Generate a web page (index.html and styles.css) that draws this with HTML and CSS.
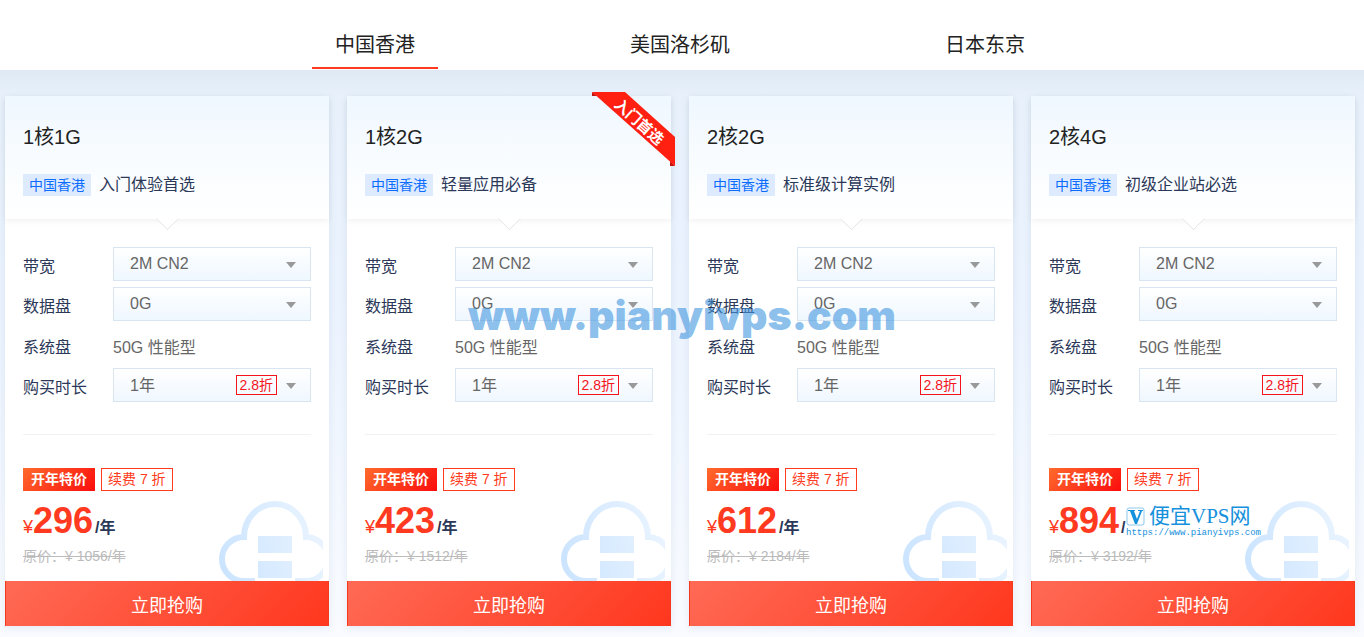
FILE: index.html
```html
<!DOCTYPE html>
<html lang="zh-CN">
<head>
    <meta charset="UTF-8">
    <meta name="viewport" content="width=device-width, initial-scale=1.0">
    <title>云服务器特价</title>
    <link rel="stylesheet" href="styles.css">
</head>
<body>
    <!-- shared shapes -->
    <svg class="sprite" width="0" height="0" aria-hidden="true">
        <defs>
            <linearGradient id="cloud-fill" gradientUnits="userSpaceOnUse" x1="0" y1="60" x2="104" y2="30">
                <stop offset="0" stop-color="#cbe4ff"/>
                <stop offset="1" stop-color="#eaf4ff"/>
            </linearGradient>
            <symbol id="cloud" viewBox="0 0 104 80">
                <path d="M36 80H25A22 22 0 0 1 25 36A31 33 0 0 1 87 36A22 22 0 0 1 87 80H76" fill="none" stroke="url(#cloud-fill)" stroke-width="6"/>
                <path d="M39 35h34v17H39zM39 60h34v17H39z" fill="url(#cloud-fill)"/>
            </symbol>
        </defs>
    </svg>

    <nav class="tabs">
        <a class="tab active" href="#hk"><span>中国香港</span></a>
        <a class="tab" href="#la"><span>美国洛杉矶</span></a>
        <a class="tab" href="#tokyo"><span>日本东京</span></a>
    </nav>

    <main class="plans">
        <form class="card">
            <div class="card-head">
                <h2>1核1G</h2>
                <p class="desc"><span class="region">中国香港</span>入门体验首选</p>
            </div>
            <div class="card-body">
                <div class="row">
                    <label for="bw1">带宽</label>
                    <div class="field"><select id="bw1"><option>2M CN2</option></select></div>
                </div>
                <div class="row">
                    <label for="disk1">数据盘</label>
                    <div class="field"><select id="disk1"><option>0G</option></select></div>
                </div>
                <div class="row row-text">
                    <span class="name">系统盘</span>
                    <span class="value">50G 性能型</span>
                </div>
                <div class="row">
                    <label for="time1">购买时长</label>
                    <div class="field"><select class="time" id="time1"><option>1年</option></select><span class="discount">2.8折</span></div>
                </div>
            </div>
            <div class="card-price">
                <div class="promo"><span class="special">开年特价</span><span class="renew">续费 7 折</span></div>
                <p class="price"><span class="yen">¥</span><strong>296</strong><span class="unit">/年</span></p>
                <p class="old"><del>原价：¥ 1056/年</del></p>
                <svg class="cloud" aria-hidden="true"><use href="#cloud"/></svg>
            </div>
            <button type="submit">立即抢购</button>
        </form>

        <form class="card">
            <!-- corner ribbon -->
            <svg class="ribbon" viewBox="0 0 83 74">
                <path d="M0 0v4h5zM83 74h-5v-5z" fill="#c4140c"/>
                <path d="M0 0h33l50 45v29z" fill="#ff2012"/>
                <text x="47" y="35" transform="rotate(42 47 30)">入门首选</text>
            </svg>
            <div class="card-head">
                <h2>1核2G</h2>
                <p class="desc"><span class="region">中国香港</span>轻量应用必备</p>
            </div>
            <div class="card-body">
                <div class="row">
                    <label for="bw2">带宽</label>
                    <div class="field"><select id="bw2"><option>2M CN2</option></select></div>
                </div>
                <div class="row">
                    <label for="disk2">数据盘</label>
                    <div class="field"><select id="disk2"><option>0G</option></select></div>
                </div>
                <div class="row row-text">
                    <span class="name">系统盘</span>
                    <span class="value">50G 性能型</span>
                </div>
                <div class="row">
                    <label for="time2">购买时长</label>
                    <div class="field"><select class="time" id="time2"><option>1年</option></select><span class="discount">2.8折</span></div>
                </div>
            </div>
            <div class="card-price">
                <div class="promo"><span class="special">开年特价</span><span class="renew">续费 7 折</span></div>
                <p class="price"><span class="yen">¥</span><strong>423</strong><span class="unit">/年</span></p>
                <p class="old"><del>原价：¥ 1512/年</del></p>
                <svg class="cloud" aria-hidden="true"><use href="#cloud"/></svg>
            </div>
            <button type="submit">立即抢购</button>
        </form>

        <form class="card">
            <div class="card-head">
                <h2>2核2G</h2>
                <p class="desc"><span class="region">中国香港</span>标准级计算实例</p>
            </div>
            <div class="card-body">
                <div class="row">
                    <label for="bw3">带宽</label>
                    <div class="field"><select id="bw3"><option>2M CN2</option></select></div>
                </div>
                <div class="row">
                    <label for="disk3">数据盘</label>
                    <div class="field"><select id="disk3"><option>0G</option></select></div>
                </div>
                <div class="row row-text">
                    <span class="name">系统盘</span>
                    <span class="value">50G 性能型</span>
                </div>
                <div class="row">
                    <label for="time3">购买时长</label>
                    <div class="field"><select class="time" id="time3"><option>1年</option></select><span class="discount">2.8折</span></div>
                </div>
            </div>
            <div class="card-price">
                <div class="promo"><span class="special">开年特价</span><span class="renew">续费 7 折</span></div>
                <p class="price"><span class="yen">¥</span><strong>612</strong><span class="unit">/年</span></p>
                <p class="old"><del>原价：¥ 2184/年</del></p>
                <svg class="cloud" aria-hidden="true"><use href="#cloud"/></svg>
            </div>
            <button type="submit">立即抢购</button>
        </form>

        <form class="card">
            <div class="card-head">
                <h2>2核4G</h2>
                <p class="desc"><span class="region">中国香港</span>初级企业站必选</p>
            </div>
            <div class="card-body">
                <div class="row">
                    <label for="bw4">带宽</label>
                    <div class="field"><select id="bw4"><option>2M CN2</option></select></div>
                </div>
                <div class="row">
                    <label for="disk4">数据盘</label>
                    <div class="field"><select id="disk4"><option>0G</option></select></div>
                </div>
                <div class="row row-text">
                    <span class="name">系统盘</span>
                    <span class="value">50G 性能型</span>
                </div>
                <div class="row">
                    <label for="time4">购买时长</label>
                    <div class="field"><select class="time" id="time4"><option>1年</option></select><span class="discount">2.8折</span></div>
                </div>
            </div>
            <div class="card-price">
                <div class="promo"><span class="special">开年特价</span><span class="renew">续费 7 折</span></div>
                <p class="price"><span class="yen">¥</span><strong>894</strong><span class="unit">/</span></p>
                <p class="old"><del>原价：¥ 3192/年</del></p>
                <svg class="cloud" aria-hidden="true"><use href="#cloud"/></svg>
                <div class="site-mark">
                    <div class="site-name">
                        <svg width="19" height="19" viewBox="0 0 19 19" aria-hidden="true">
                            <rect x="1" y="1" width="17" height="17" rx="2" fill="#fff" stroke="#8cc8ee"/>
                            <path d="M2 3h7v1H8l3 8 3-8h-2V3h5v1h-1l-5 13H9L4 4H2z" fill="#1590dc"/>
                        </svg>
                        便宜VPS网
                    </div>
                    <div class="site-url">https://www.pianyivps.com</div>
                </div>
            </div>
            <button type="submit">立即抢购</button>
        </form>
    </main>

    <div class="watermark">www.pianyivps.com</div>
</body>
</html>
```

FILE: styles.css
```css
* {
    box-sizing: border-box;
}

body {
    margin: 0;
    position: relative;
    min-height: 100vh;
    display: flex;
    flex-direction: column;
    font-family: "Liberation Sans", "Noto Sans CJK SC", sans-serif;
    font-size: 16px;
    color: #2b3858;
    background: #fff;
}

h2, p {
    margin: 0;
}

.sprite {
    position: absolute;
}

/* Region tabs */
.tabs {
    display: flex;
    justify-content: center;
    height: 70px;
    padding: 0 9px 0 5px;
}
.tab {
    flex: 0 1 305px;
    display: flex;
    justify-content: center;
    color: #222;
    font-size: 20px;
    line-height: 24px;
    text-decoration: none;
}
.tab span {
    padding: 33px 23px 10px;
    margin-bottom: 1px;
    border-bottom: 2px solid transparent;
}
.tab.active span {
    border-bottom-color: #ff3a20;
}

/* Card grid */
.plans {
    flex: 1;
    display: grid;
    grid-template-columns: repeat(4, 1fr);
    align-items: start;
    gap: 18px;
    padding: 26px 9px 11px 5px;
    background: linear-gradient(#dfe9f4, #e8f1fb 26px, #ebf3fe 240px, #f9fbff);
}
.card {
    position: relative;
    background: #fff;
    box-shadow: 0 2px 8px rgba(60, 90, 140, 0.1);
}
.card-head {
    position: relative;
    height: 123px;
    padding: 27px 18px 0;
    background: linear-gradient(#eff7ff, #f8fcff 50%, #fff);
    box-shadow: 0 2px 6px rgba(0, 0, 0, 0.06);
}
.card-head::after {
    content: "";
    position: absolute;
    left: 50%;
    bottom: -8px;
    width: 16px;
    height: 16px;
    margin-left: -8px;
    background: #fff;
    border: solid #e4e6ea;
    border-width: 0 1px 1px 0;
    transform: rotate(45deg);
    clip-path: polygon(100% 0, 100% 100%, 0 100%);
}
h2 {
    font-size: 20px;
    line-height: 28px;
    font-weight: 400;
    color: #222;
}
.desc {
    display: flex;
    align-items: center;
    gap: 8px;
    margin-top: 23px;
    line-height: 22px;
}
.region {
    padding: 0 6px;
    font-size: 14px;
    line-height: 22px;
    color: #0a6cff;
    background: #deebff;
}

/* Options */
.card-body {
    display: flex;
    flex-direction: column;
    gap: 6px;
    margin: 0 18px;
    padding: 28px 0 32px;
    border-bottom: 1px solid #f1f2f4;
}
.row {
    display: flex;
    align-items: center;
    min-height: 34px;
}
.row-text {
    min-height: 35px;
}
.row label,
.name {
    flex: 0 0 90px;
    padding-top: 2px;
}
.value {
    padding-top: 2px;
    color: #666;
}
.field {
    position: relative;
    flex: 1;
}
.field::after {
    content: "";
    position: absolute;
    right: 15px;
    top: 15px;
    border: 5px solid transparent;
    border-top: 6px solid #999;
    border-bottom: 0;
    pointer-events: none;
}
select {
    display: block;
    width: 100%;
    height: 34px;
    padding: 0 30px 2px 16px;
    appearance: none;
    border: 1px solid #d9e6f2;
    border-radius: 0;
    background: linear-gradient(#fff, #eff7ff);
    color: #666;
    font: inherit;
}
.time {
    padding-bottom: 0;
}
.discount {
    position: absolute;
    right: 34px;
    top: 7px;
    padding: 0 3px;
    border: 1px solid #f5141c;
    color: #f5141c;
    font-size: 14px;
    line-height: 18px;
    pointer-events: none;
}

/* Price */
.card-price {
    position: relative;
    height: 146px;
    padding: 33px 18px 0;
}
.promo {
    display: flex;
    gap: 6px;
    font-size: 14px;
}
.special {
    padding: 0 8px;
    line-height: 23px;
    font-weight: 700;
    color: #fff;
    background: linear-gradient(135deg, #ff6a2c, #fb0d0d);
}
.renew {
    padding: 0 6px;
    border: 1px solid #ff3a20;
    line-height: 21px;
    color: #ff3a20;
}
.price {
    margin-top: 10px;
    line-height: 40px;
    white-space: nowrap;
}
.yen,
.price strong {
    color: #ff3a20;
}
.yen {
    font-size: 18px;
}
.price strong {
    font-size: 36px;
}
.unit {
    margin-left: 2px;
    font-weight: 700;
}
.old {
    margin-top: -2px;
    font-size: 14px;
    line-height: 20px;
    color: #bbb;
}
.cloud {
    position: absolute;
    right: 6px;
    bottom: 0;
    width: 104px;
    height: 80px;
}
button {
    display: block;
    width: 100%;
    height: 45px;
    padding: 0;
    border: solid #f5391f;
    border-width: 0 1px;
    background: linear-gradient(135deg, #ff6a55, #ff371e);
    color: #fff;
    font: inherit;
    font-size: 18px;
    cursor: pointer;
}

/* Ribbon */
.ribbon {
    position: absolute;
    top: -4px;
    right: -4px;
    z-index: 1;
    width: 83px;
    height: 74px;
}
.ribbon text {
    font-size: 15px;
    font-weight: 700;
    fill: #fff;
    text-anchor: middle;
}

/* Site marks */
.site-mark {
    position: absolute;
    left: 95px;
    top: 69px;
    color: #1590dc;
}
.site-name {
    display: flex;
    align-items: center;
    gap: 4px;
    font-family: "Liberation Serif", "Noto Sans CJK SC", serif;
    font-size: 21px;
    line-height: 24px;
}
.site-url {
    font-family: "Liberation Mono", monospace;
    font-size: 9px;
    line-height: 10px;
}
.watermark {
    position: absolute;
    top: 291px;
    left: 0;
    right: 0;
    text-align: center;
    font-family: Inter, sans-serif;
    font-size: 41px;
    line-height: 48px;
    font-weight: 900;
    color: rgba(65, 150, 224, 0.62);
    pointer-events: none;
}
```
